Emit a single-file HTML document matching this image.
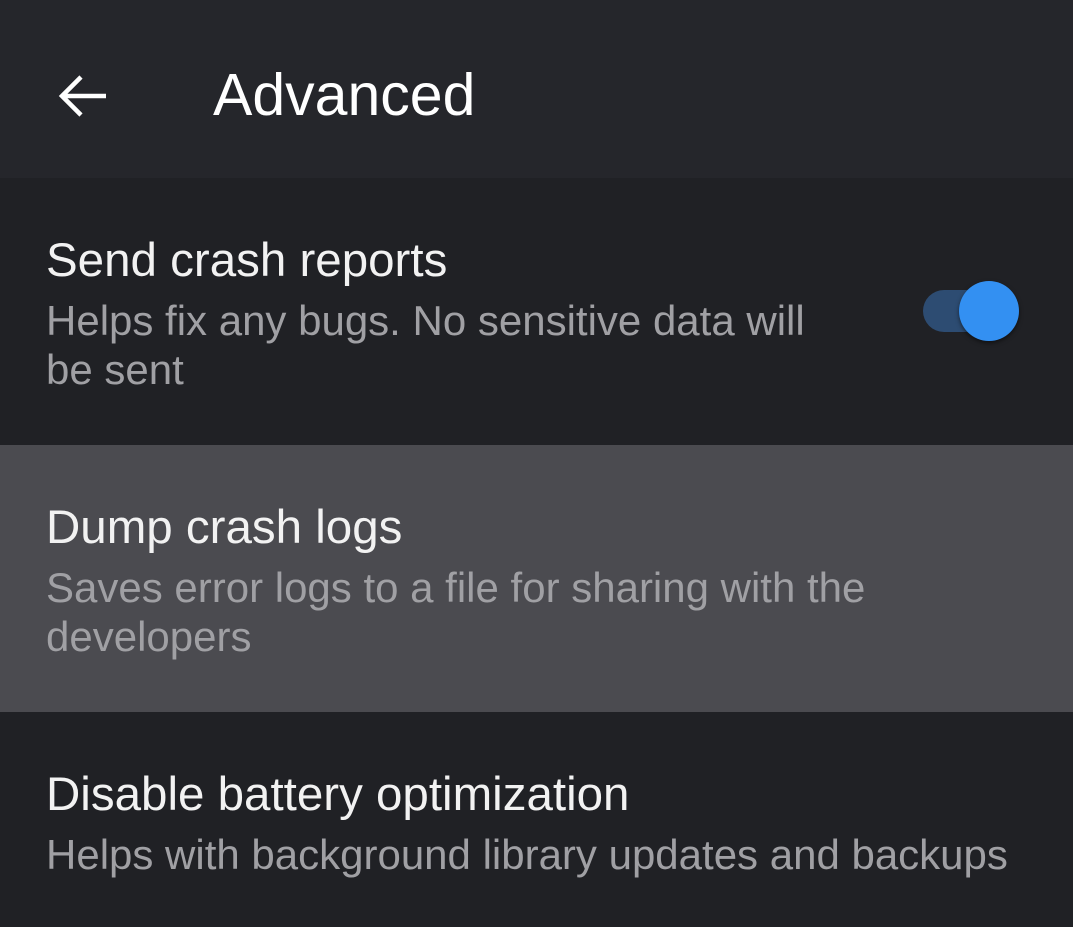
<html><head><style>
body{margin:0;width:1073px;height:927px;background:#202125;font-family:"Liberation Sans",sans-serif;overflow:hidden;position:relative}
.hdr{position:absolute;left:0;top:0;width:1073px;height:178px;background:#25262b}
.t{position:absolute;left:46px;color:#f2f2f2;font-size:47.5px;white-space:nowrap}
.s{position:absolute;left:46px;color:#a0a0a4;font-size:42px;line-height:49px;white-space:nowrap}
</style></head><body>
<div class="hdr">
<svg style="position:absolute;left:56px;top:72px" width="52" height="48" viewBox="0 0 52 48"><path d="M50 24H6M25 5L6 24L25 43" stroke="#fff" stroke-width="4.5" fill="none"/></svg>
<div style="position:absolute;left:213px;top:61px;font-size:59px;color:#fff">Advanced</div>
</div>
<div class="t" style="top:233px">Send crash reports</div>
<div class="s" style="top:296px">Helps fix any bugs. No sensitive data will<br>be sent</div>
<div style="position:absolute;left:923px;top:290px;width:70px;height:42px;border-radius:21px;background:#2d4c72"></div>
<div style="position:absolute;left:959px;top:281px;width:60px;height:60px;border-radius:50%;background:#3390f2;box-shadow:0 2px 4px rgba(0,0,0,.5)"></div>
<div style="position:absolute;left:0;top:445px;width:1073px;height:267px;background:#4b4b50"></div>
<div class="t" style="top:500px">Dump crash logs</div>
<div class="s" style="top:563px">Saves error logs to a file for sharing with the<br>developers</div>
<div class="t" style="top:767px">Disable battery optimization</div>
<div class="s" style="top:830px">Helps with background library updates and backups</div>
</body></html>
